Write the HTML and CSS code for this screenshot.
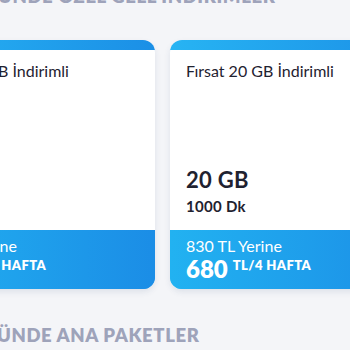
FILE: index.html
```html
<!DOCTYPE html>
<html lang="tr">
<head>
<meta charset="utf-8">
<link rel="stylesheet" href="styles.css">
</head>
<body>
<div class="page">
  <h2 class="section-title title-top">GÜNDE ÖZEL GELL İNDİRİMLER</h2>
  <div class="carousel">
    <div class="track">
      <div class="card">
        <div class="card-body">
          <div class="card-name">Fırsat 10 GB İndirimli</div>
          <div class="specs">
            <div class="gb">10 GB</div>
            <div class="dk">1000 Dk</div>
          </div>
        </div>
        <div class="card-price">
          <div class="old">830 TL Yerine</div>
          <div class="new"><span class="amount">680</span><span class="unit">TL/4 HAFTA</span></div>
        </div>
      </div>
      <div class="card">
        <div class="card-body">
          <div class="card-name">Fırsat 20 GB İndirimli</div>
          <div class="specs">
            <div class="gb">20 GB</div>
            <div class="dk">1000 Dk</div>
          </div>
        </div>
        <div class="card-price">
          <div class="old">830 TL Yerine</div>
          <div class="new"><span class="amount">680</span><span class="unit">TL/4 HAFTA</span></div>
        </div>
      </div>
    </div>
  </div>
  <h2 class="section-title title-bottom">GÜNDE ANA PAKETLER</h2>
</div>
</body>
</html>
```
FILE: styles.css
```css
* { box-sizing: border-box; }
html, body {
  margin: 0;
  padding: 0;
  background: #f4f5f8;
  overflow: hidden;
}
body {
  font-family: Lato, "Noto Sans", sans-serif;
  color: #1f2230;
}
.page {
  width: 350px;
  height: 350px;
  overflow: hidden;
}
.section-title {
  margin: 0;
  font-size: 18.5px;
  font-weight: 800;
  letter-spacing: 0.6px;
  color: #9ea3ba;
  white-space: nowrap;
  line-height: 24px;
}
.title-top {
  margin-top: -16px;
  margin-left: -16px;
}
.title-bottom {
  margin-top: 34px;
  margin-left: -17px;
}
.carousel {
  margin-top: 32px;
}
.track {
  display: flex;
  gap: 15px;
  margin-left: -95px;
  width: max-content;
}
.card {
  width: 250px;
  height: 249px;
  border-radius: 12px;
  overflow: hidden;
  display: flex;
  flex-direction: column;
  padding-top: 10px;
  background: linear-gradient(90deg, #27b4f3 0%, #1b8fe6 100%);
  box-shadow: 0 3px 6px rgba(30, 60, 110, 0.10);
}
.card-body {
  flex: 1;
  background: #fff;
  display: flex;
  flex-direction: column;
  padding: 11px 16px 14px;
}
.card-name {
  font-size: 16px;
  line-height: 20px;
  color: #1f2230;
}
.specs {
  margin-top: auto;
}
.gb {
  font-size: 22px;
  font-weight: 700;
  line-height: 26px;
  letter-spacing: 0.3px;
}
.dk {
  font-size: 15px;
  font-weight: 700;
  line-height: 20px;
  margin-top: 3px;
  letter-spacing: 0.3px;
}
.card-price {
  height: 59px;
  padding: 6px 16px 0;
  color: #fff;
  background: linear-gradient(90deg, #22b2f1 0%, #1b8de6 100%);
}
.old {
  font-size: 16px;
  line-height: 20px;
}
.new {
  display: flex;
  align-items: flex-start;
  gap: 5px;
  line-height: 26px;
}
.amount {
  font-size: 24px;
  font-weight: 800;
}
.unit {
  font-size: 13px;
  font-weight: 800;
  line-height: 18px;
  letter-spacing: 0.4px;
}
```
